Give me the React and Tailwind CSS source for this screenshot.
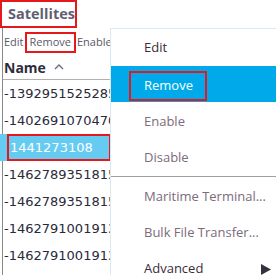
const rows = [
  '-1392951525285',
  '-1402691070470',
  '1441273108',
  '-1462789351815',
  '-1462789351815',
  '-1462791001913',
  '-1462791001913',
];

const MenuItem = ({ label, active, muted, className = '', children }) => (
  <div
    className={`h-[36px] flex items-center pl-[33px] pr-[5px] ${active ? 'bg-[#00aaea] text-white' : muted ? 'text-[#7b6b7b]' : 'text-[#3b2b3b]'} ${className}`}
  >
    {children || label}
  </div>
);

export default function App() {
  return (
    <div className="relative w-[276px] h-[275px] overflow-hidden bg-white font-['Open_Sans',sans-serif]">
      <div className="w-[77px] h-[28px] border-2 border-[#e5191c] flex items-center pl-[6px]">
        <span className="text-[14.5px] font-bold text-[#625e72] leading-none">Satellites</span>
      </div>

      <div className="ml-[2px] border-l border-[#8a8a8a] h-[247px] w-[108px]">
        <div className="h-[28px] flex items-center text-[11px] text-[#5a5868] whitespace-nowrap">
          <span className="pl-[1px]">Edit</span>
          <span className="ml-[1px] border-2 border-[#e5191c] px-[3px] h-[21px] flex items-center">Remove</span>
          <span className="ml-[1px]">Enable</span>
        </div>
        <div className="h-[24px] flex items-center border-b border-[#b0b0b0] gap-[8px] pl-[1px]">
          <span className="text-[14px] font-bold text-[#2d2d3d]">Name</span>
          <svg width="10" height="7" viewBox="0 0 10 7" className="mt-[-2px]">
            <path d="M1 6 L5 2 L9 6" fill="none" stroke="#6a6a7a" strokeWidth="1.3" />
          </svg>
        </div>
        <div className="font-['DejaVu_Sans',sans-serif] text-[13px] text-[#2a2a3a]">
          {rows.map((r, i) =>
            i === 2 ? (
              <div key={i} className="h-[27px] -ml-[3px] w-[111px] bg-[#66cbf1] flex items-center">
                <div className="ml-[7px] h-[27px] flex-1 border-2 border-[#e5191c] flex items-center pl-[1px] text-white">
                  {r}
                </div>
              </div>
            ) : (
              <div key={i} className="h-[27px] flex items-center pl-[1px] whitespace-nowrap overflow-hidden">
                {r}
              </div>
            )
          )}
        </div>
      </div>

      <div className="absolute left-[110px] top-[28px] right-0 bottom-0 bg-white border-l border-t border-[#dbe9f5] text-[13px]">
        <MenuItem label="Edit" className="mt-[1px]" />
        <div className="h-[36px] bg-[#00aaea] flex items-center pl-[18px]">
          <div className="w-[78px] h-[30px] mt-[4px] border-2 border-[#e5191c] flex items-center pl-[13px] text-white">
            Remove
          </div>
        </div>
        <MenuItem label="Enable" muted className="mt-[2px]" />
        <MenuItem label="Disable" muted />
        <div className="h-px bg-[#a0a0a0]" />
        <MenuItem label="Maritime Terminal..." muted className="mt-[2px]" />
        <MenuItem label="Bulk File Transfer..." muted />
        <MenuItem>
          <span className="flex-1">Advanced</span>
          <svg width="10" height="11" viewBox="0 0 10 11">
            <path d="M0 0 L10 5.5 L0 11 Z" fill="#333340" />
          </svg>
        </MenuItem>
      </div>
    </div>
  );
}
